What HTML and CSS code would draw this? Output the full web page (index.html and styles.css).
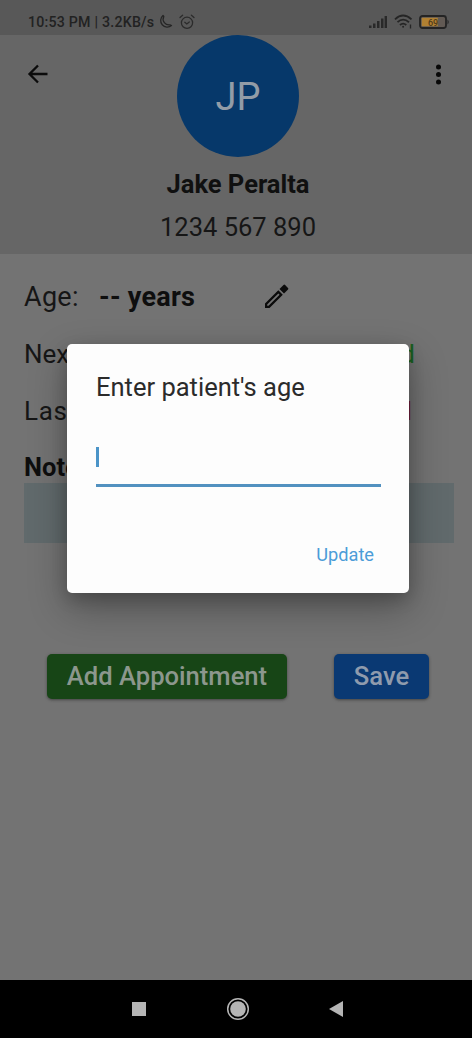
FILE: index.html
```html
<!DOCTYPE html>
<html lang="en">
<head>
<meta charset="utf-8">
<title>Patient details</title>
<link rel="stylesheet" href="styles.css">
</head>
<body>
<div class="phone">
  <div class="status">
    <span class="status-time">10:53 PM | 3.2KB/s</span>
    <svg class="moon" width="16" height="16" viewBox="0 0 16 16"><path d="M6 1.5A6.400 6.400 0 1 0 14.500 11.500L13 10.800C8.500 11.500 4.500 7 6.800 2.500Z" fill="none" stroke="#262626" stroke-width="1.300" stroke-linejoin="round"/></svg>
    <svg class="alarm" width="16" height="16" viewBox="0 0 16 16" fill="none" stroke="#2b2b2b" stroke-width="1.300" stroke-linecap="round"><circle cx="8" cy="8.800" r="5.600"/><path d="M1 3.600L3.600 1.300M15 3.600L12.400 1.300M5.800 8.300L7.800 10L10.300 8"/></svg>
    <span class="grow"></span>
    <svg class="signal" width="19" height="14" viewBox="0 0 19 14" fill="#292929"><rect x="0" y="10.500" width="2.500" height="2.500"/><rect x="4" y="8.500" width="2.500" height="4.500"/><rect x="8" y="6" width="2.500" height="7"/><rect x="12" y="3.500" width="2.500" height="9.500"/><rect x="15.600" y="1" width="2.400" height="12"/></svg>
    <svg class="wifi" width="19" height="15" viewBox="0 0 19 15" fill="none" stroke="#252525" stroke-width="1.800"><path d="M1 5.300Q9 -2.200 17.500 5.300M3.500 8.200Q9 3 15 8.200M6 11Q9 8.200 12.300 11"/><circle cx="9.100" cy="12.800" r="1" fill="#252525" stroke="none"/><path d="M16.500 10.500v4" stroke-width="1.300"/></svg>
    <svg class="battery" width="31" height="14" viewBox="0 0 31 14"><rect x="1" y="1" width="26" height="12" rx="2.500" fill="#625a54" stroke="#242424" stroke-width="1.800"/><rect x="2.800" y="2.800" width="16" height="8.400" fill="#b18132"/><path d="M28.500 4.500Q31 7 28.500 9.500Z" fill="#242424"/><text x="14" y="10.600" text-anchor="middle" class="battery-text">69</text></svg>
  </div>

  <header class="header">
    <svg class="back" width="22" height="20" viewBox="0 0 22 20" fill="none" stroke="#0b0b0b" stroke-width="2.300"><path d="M20.500 10H2.500M11 1.500L2.500 10L11 18.500"/></svg>
    <div class="person">
      <div class="avatar">JP</div>
      <div class="name">Jake Peralta</div>
      <div class="number">1234 567 890</div>
    </div>
    <svg class="more" width="8" height="22" viewBox="0 0 8 22" fill="#080808"><circle cx="4.500" cy="3" r="2.500"/><circle cx="4.500" cy="10.500" r="2.500"/><circle cx="4.500" cy="18" r="2.500"/></svg>
  </header>

  <main class="details">
    <div class="row age-row">
      <span class="label">Age:</span><b class="age">-- years</b>
      <svg class="pencil" width="26" height="26" viewBox="0 0 26 26"><path d="M2 19.500V24H6.500L19.800 10.700L15.300 6.200ZM4.200 21.800V20.500L15.300 9.400L16.600 10.700L5.500 21.800ZM21 9.500L25 5.500Q25.800 4.700 25 3.900L22.100 1Q21.300 0.200 20.500 1L16.500 5Z" fill="#0b0b0b" fill-rule="evenodd"/></svg>
    </div>
    <div class="row"><span>Next visit:</span><span class="state scheduled">Scheduled</span></div>
    <div class="row last"><span>Last visit:</span><span class="state missed">Missed</span></div>
    <div class="notes-label">Notes:</div>
    <div class="notes"></div>
    <div class="actions">
      <button class="btn add">Add Appointment</button>
      <button class="btn save">Save</button>
    </div>
  </main>

  <nav class="nav">
    <svg width="16" height="16" viewBox="0 0 16 16"><rect x="1" y="1" width="14" height="14" fill="#b5b5b5"/></svg>
    <svg class="home" width="24" height="24" viewBox="0 0 24 24"><circle cx="12" cy="12" r="10.300" fill="none" stroke="#b5b5b5" stroke-width="1.500"/><circle cx="12" cy="12" r="7.800" fill="#b5b5b5"/></svg>
    <svg width="16" height="18" viewBox="0 0 16 18"><path d="M15 1V17L1 9Z" fill="#b5b5b5"/></svg>
  </nav>

  <section class="dialog">
    <div class="dialog-title">Enter patient's age</div>
    <div class="field"><span class="caret"></span></div>
    <div class="update">Update</div>
  </section>
</div>
</body>
</html>
```
FILE: styles.css
```css
* { box-sizing: border-box; }
body { margin: 0; font-family: Roboto, sans-serif; }
.phone {
  position: relative;
  display: flex;
  flex-direction: column;
  width: 472px;
  height: 1038px;
  overflow: hidden;
  background: #737373;
  color: #161616;
}
.status {
  display: flex;
  align-items: center;
  height: 35px;
  padding: 8px 22px 0 28px;
  background: #585858;
}
.status-time { width: 128px; font-size: 14.2px; font-weight: 500; letter-spacing: .22px; white-space: nowrap; color: #222; }
.moon { margin-left: 1px; }
.alarm { margin-left: 6px; }
.grow { flex: 1; }
.wifi { margin-left: 6px; }
.battery { margin-left: 6px; }
.battery-text { font: 500 9px Roboto, sans-serif; fill: #4f3b1b; }
.header {
  display: flex;
  justify-content: space-between;
  height: 219px;
  padding: 0 30px 0 27px;
  background: #666;
}
.back { margin-top: 29px; }
.more { margin-top: 29px; }
.person { display: flex; flex-direction: column; align-items: center; margin-left: -7px; }
.avatar {
  width: 122px;
  height: 122px;
  border-radius: 50%;
  background: #06386a;
  color: #929ca7;
  font-size: 38px;
  line-height: 124px;
  text-align: center;
}
.name { margin-top: 10px; font-size: 25.5px; line-height: 34px; font-weight: 700; color: #101010; }
.number { margin-top: 9px; font-size: 25.5px; line-height: 34px; }
.details { flex: 1; padding: 14px 18px 0 24px; }
.row { display: flex; align-items: center; height: 57px; font-size: 26px; white-space: nowrap; }
.age-row { line-height: 30px; }
.label { width: 75px; font-size: 27px; letter-spacing: .3px; }
.age { width: 164px; font-size: 27px; letter-spacing: .25px; color: #0e0e0e; }
.last { letter-spacing: .7px; }
.state { margin-left: auto; margin-right: 39px; letter-spacing: 0; }
.scheduled { color: #19601f; }
.missed { color: #701c29; margin-right: 42px; }
.notes-label { height: 44px; font-size: 25.5px; font-weight: 700; line-height: 57px; color: #0e0e0e; }
.notes { height: 60px; background: #616a6c; }
.actions { display: flex; justify-content: space-between; padding: 111px 25px 0 23px; }
.btn {
  height: 45px;
  padding: 0 0 2px;
  border: 0;
  border-radius: 5px;
  font: 500 25.6px/42px Roboto, sans-serif;
  color: #8c978d;
  box-shadow: 0 1px 3px #444;
}
.add { width: 240px; background: #174516; }
.save { width: 95px; background: #0a3973; color: #8f9bad; }
.nav {
  display: flex;
  align-items: center;
  justify-content: space-between;
  height: 58px;
  padding: 0 128px 0 131px;
  background: #000;
}
.dialog {
  position: absolute;
  left: 67px;
  top: 344px;
  width: 342px;
  height: 249px;
  padding: 25px 28px 0 29px;
  border-radius: 5px;
  background: #fdfdfd;
  box-shadow: 0 15px 38px rgba(0, 0, 0, .3), 0 6px 16px rgba(0, 0, 0, .18);
}
.dialog-title { height: 36px; font-size: 25.5px; line-height: 37px; color: #2b2b2b; white-space: nowrap; }
.field { height: 82px; padding-top: 42px; border-bottom: 3px solid #5291c0; }
.caret { display: block; width: 3px; height: 20px; background: #4b94c8; }
.update { padding-top: 55px; padding-right: 7px; font-size: 18.2px; line-height: 26px; text-align: right; color: #4b9cd8; }
```
